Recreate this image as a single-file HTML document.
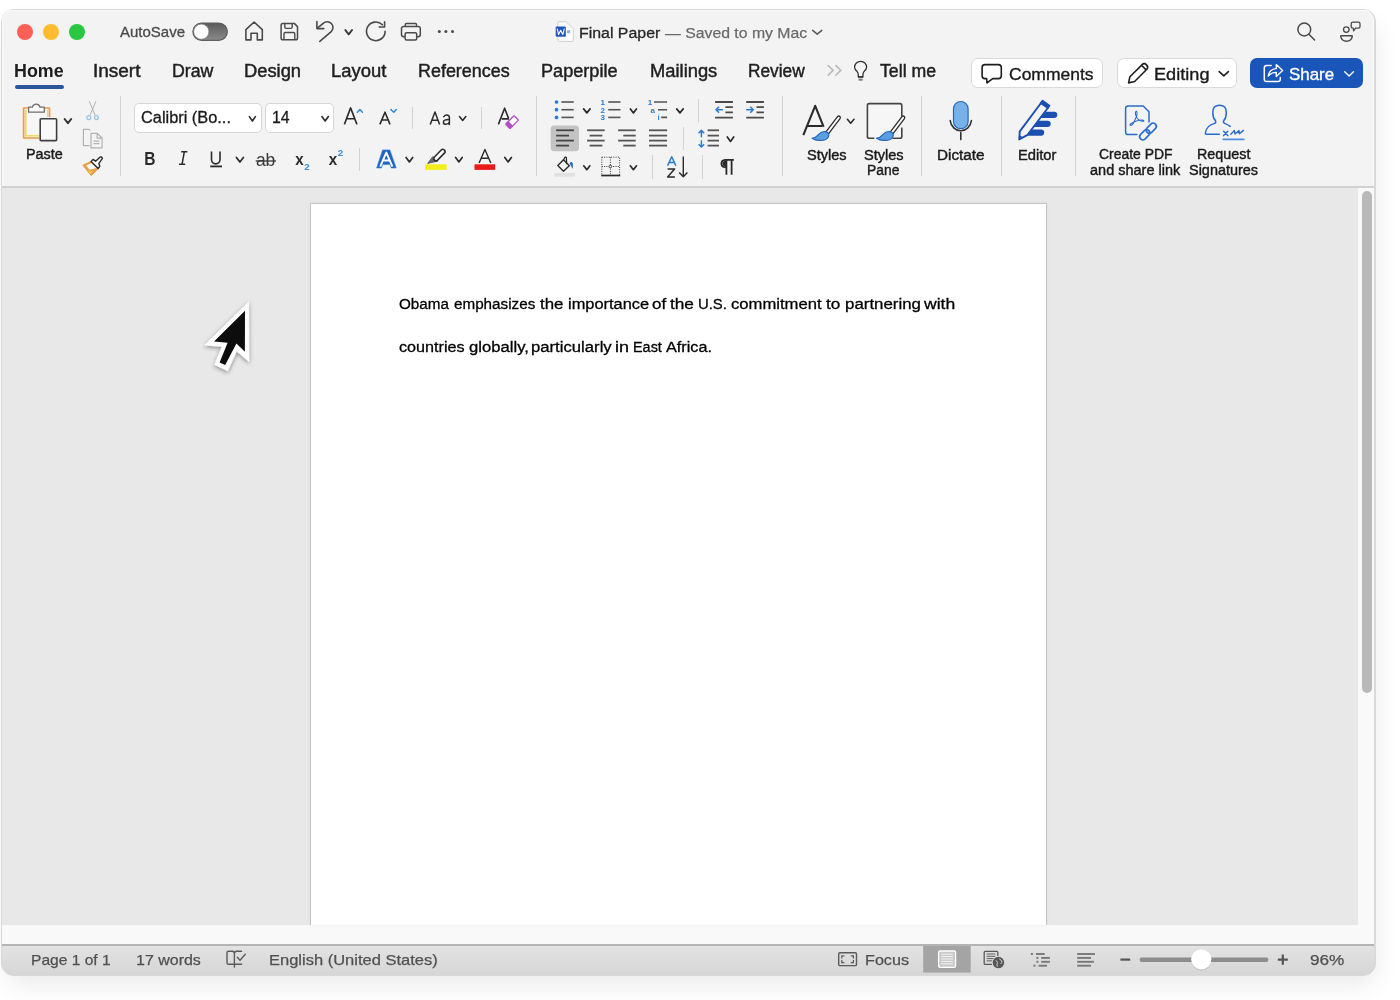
<!DOCTYPE html>
<html><head><meta charset="utf-8"><style>
html,body{margin:0;padding:0;width:1400px;height:1000px;overflow:hidden;background:#fff;font-family:"Liberation Sans", sans-serif}
.t{position:absolute;white-space:nowrap;transform-origin:0 0;font-family:"Liberation Sans", sans-serif}
#win{position:absolute;left:1px;top:8.5px;width:1374.5px;height:967.5px;border-radius:13px;background:#d9d9d9;box-shadow:3px 12px 26px -4px rgba(0,0,0,0.09)}
svg{overflow:visible}
</style></head><body>
<div id="root" style="position:absolute;left:0;top:0;width:1400px;height:1000px;will-change:transform">
<div id="win"></div>
<div style="position:absolute;left:2px;top:10px;width:1372px;height:176px;background:#f3f3f3;border-radius:11px 11px 0 0;box-shadow:inset 0 1px 0 #fafafa,inset 1px 0 0 #fafafa,inset -1px 0 0 #fafafa"></div>
<div style="position:absolute;left:2px;top:186px;width:1372px;height:2px;background:#d2d2d2"></div>
<div style="position:absolute;left:2px;top:188px;width:1356px;height:737px;background:#e8e8e8"></div>
<div style="position:absolute;left:1358px;top:188px;width:16px;height:737px;background:#f9f9f9"></div>
<div style="position:absolute;left:1362px;top:191px;width:10px;height:502px;background:#b9b9b9;border-radius:5px"></div>
<div style="position:absolute;left:2px;top:925px;width:1372px;height:19px;background:#f9f9f9"></div>
<div style="position:absolute;left:2px;top:944px;width:1372px;height:2px;background:#b4b4b4"></div>
<div style="position:absolute;left:2px;top:946px;width:1372px;height:29px;background:linear-gradient(#e2e2e2,#d6d6d6);border-radius:0 0 13px 13px"></div>
<div style="position:absolute;left:310px;top:203px;width:737px;height:722px;background:#fff;border:1px solid #c4c4c4;border-bottom:none;box-sizing:border-box;box-shadow:0 0 3px rgba(0,0,0,0.06)"></div>
<div style="position:absolute;left:17px;top:23.5px;width:16px;height:16px;background:#fe5f57;border-radius:50%"></div>
<div style="position:absolute;left:43px;top:23.5px;width:16px;height:16px;background:#febc2e;border-radius:50%"></div>
<div style="position:absolute;left:69px;top:23.5px;width:16px;height:16px;background:#28c840;border-radius:50%"></div>
<div class="t" style="left:120.00px;top:24.15px;font-size:15px;line-height:15px;color:#4a4a4a;transform:scaleX(0.9992);-webkit-text-stroke:0.3px #4a4a4a;">AutoSave</div>
<div class="t" style="left:579.03px;top:24.73px;font-size:15.5px;line-height:15.5px;color:#262626;transform:scaleX(1.0253);-webkit-text-stroke:0.3px #262626;">Final Paper</div>
<div class="t" style="left:665.00px;top:24.73px;font-size:15.5px;line-height:15.5px;color:#6a6a6a;transform:scaleX(1.0188);-webkit-text-stroke:0.25px #6a6a6a;">— Saved to my Mac</div>
<div class="t" style="left:14.24px;top:62.53px;font-size:17.5px;line-height:17.5px;color:#1d1d1d;font-weight:bold;transform:scaleX(1.0211);">Home</div>
<div class="t" style="left:92.99px;top:62.53px;font-size:17.5px;line-height:17.5px;color:#1f1f1f;transform:scaleX(1.0835);-webkit-text-stroke:0.45px #1f1f1f;">Insert</div>
<div class="t" style="left:171.58px;top:62.53px;font-size:17.5px;line-height:17.5px;color:#1f1f1f;transform:scaleX(1.0136);-webkit-text-stroke:0.45px #1f1f1f;">Draw</div>
<div class="t" style="left:244.23px;top:62.53px;font-size:17.5px;line-height:17.5px;color:#1f1f1f;transform:scaleX(1.0465);-webkit-text-stroke:0.45px #1f1f1f;">Design</div>
<div class="t" style="left:330.53px;top:62.53px;font-size:17.5px;line-height:17.5px;color:#1f1f1f;transform:scaleX(1.0527);-webkit-text-stroke:0.45px #1f1f1f;">Layout</div>
<div class="t" style="left:417.57px;top:62.53px;font-size:17.5px;line-height:17.5px;color:#1f1f1f;transform:scaleX(1.0240);-webkit-text-stroke:0.45px #1f1f1f;">References</div>
<div class="t" style="left:540.85px;top:62.53px;font-size:17.5px;line-height:17.5px;color:#1f1f1f;transform:scaleX(1.0355);-webkit-text-stroke:0.45px #1f1f1f;">Paperpile</div>
<div class="t" style="left:649.93px;top:62.53px;font-size:17.5px;line-height:17.5px;color:#1f1f1f;transform:scaleX(1.0480);-webkit-text-stroke:0.45px #1f1f1f;">Mailings</div>
<div class="t" style="left:748.32px;top:62.53px;font-size:17.5px;line-height:17.5px;color:#1f1f1f;transform:scaleX(0.9875);-webkit-text-stroke:0.45px #1f1f1f;">Review</div>
<div class="t" style="left:879.65px;top:62.53px;font-size:17.5px;line-height:17.5px;color:#1f1f1f;transform:scaleX(1.0120);-webkit-text-stroke:0.45px #1f1f1f;">Tell me</div>
<div style="position:absolute;left:15px;top:84.6px;width:49px;height:4px;background:#2b579a;border-radius:2px"></div>
<div style="position:absolute;left:970.5px;top:58.4px;width:132px;height:30px;background:#fff;border:1px solid #dadada;border-radius:7px;box-sizing:border-box"></div>
<div style="position:absolute;left:1116.6px;top:58.4px;width:120px;height:30px;background:#fff;border:1px solid #dadada;border-radius:7px;box-sizing:border-box"></div>
<div style="position:absolute;left:1250.4px;top:57.8px;width:113px;height:30.6px;background:#1a55b9;border-radius:7px"></div>
<div class="t" style="left:1008.63px;top:65.55px;font-size:17px;line-height:17px;color:#1a1a1a;transform:scaleX(1.0291);-webkit-text-stroke:0.35px #1a1a1a;">Comments</div>
<div class="t" style="left:1154.15px;top:65.55px;font-size:17px;line-height:17px;color:#1a1a1a;transform:scaleX(1.0673);-webkit-text-stroke:0.35px #1a1a1a;">Editing</div>
<div class="t" style="left:1289.24px;top:65.55px;font-size:17px;line-height:17px;color:#ffffff;transform:scaleX(0.9937);-webkit-text-stroke:0.35px #ffffff;">Share</div>
<div style="position:absolute;left:134.4px;top:102.7px;width:127.2px;height:30.3px;background:#fff;border:1px solid #d6d6d6;border-radius:5px;box-sizing:border-box"></div>
<div style="position:absolute;left:265.2px;top:102.7px;width:69.3px;height:30.3px;background:#fff;border:1px solid #d6d6d6;border-radius:5px;box-sizing:border-box"></div>
<div class="t" style="left:141.18px;top:109.70px;font-size:16px;line-height:16px;color:#1a1a1a;transform:scaleX(1.0215);-webkit-text-stroke:0.3px #1a1a1a;">Calibri (Bo...</div>
<div class="t" style="left:271.61px;top:109.70px;font-size:16px;line-height:16px;color:#1a1a1a;transform:scaleX(0.9888);-webkit-text-stroke:0.3px #1a1a1a;">14</div>
<div class="t" style="left:25.85px;top:147.10px;font-size:14px;line-height:14px;color:#1a1a1a;transform:scaleX(1.0288);-webkit-text-stroke:0.4px #1a1a1a;">Paste</div>
<div class="t" style="left:806.84px;top:147.60px;font-size:14px;line-height:14px;color:#1a1a1a;transform:scaleX(1.0397);-webkit-text-stroke:0.4px #1a1a1a;">Styles</div>
<div class="t" style="left:863.64px;top:147.60px;font-size:14px;line-height:14px;color:#1a1a1a;transform:scaleX(1.0397);-webkit-text-stroke:0.4px #1a1a1a;">Styles</div>
<div class="t" style="left:866.89px;top:163.20px;font-size:14px;line-height:14px;color:#1a1a1a;transform:scaleX(0.9890);-webkit-text-stroke:0.4px #1a1a1a;">Pane</div>
<div class="t" style="left:936.98px;top:147.60px;font-size:14px;line-height:14px;color:#1a1a1a;transform:scaleX(1.0912);-webkit-text-stroke:0.4px #1a1a1a;">Dictate</div>
<div class="t" style="left:1017.82px;top:147.60px;font-size:14px;line-height:14px;color:#1a1a1a;transform:scaleX(1.0508);-webkit-text-stroke:0.4px #1a1a1a;">Editor</div>
<div class="t" style="left:1099.00px;top:147.20px;font-size:14px;line-height:14px;color:#1a1a1a;transform:scaleX(0.9950);-webkit-text-stroke:0.4px #1a1a1a;">Create PDF</div>
<div class="t" style="left:1090.42px;top:163.00px;font-size:14px;line-height:14px;color:#1a1a1a;transform:scaleX(1.0359);-webkit-text-stroke:0.4px #1a1a1a;">and share link</div>
<div class="t" style="left:1196.75px;top:147.20px;font-size:14px;line-height:14px;color:#1a1a1a;transform:scaleX(1.0238);-webkit-text-stroke:0.4px #1a1a1a;">Request</div>
<div class="t" style="left:1189.35px;top:163.00px;font-size:14px;line-height:14px;color:#1a1a1a;transform:scaleX(1.0319);-webkit-text-stroke:0.4px #1a1a1a;">Signatures</div>
<div style="position:absolute;left:120px;top:96px;width:1px;height:80px;background:#d2d2d2"></div>
<div style="position:absolute;left:536px;top:96px;width:1px;height:80px;background:#d2d2d2"></div>
<div style="position:absolute;left:782px;top:96px;width:1px;height:80px;background:#d2d2d2"></div>
<div style="position:absolute;left:921px;top:96px;width:1px;height:80px;background:#d2d2d2"></div>
<div style="position:absolute;left:1001px;top:96px;width:1px;height:80px;background:#d2d2d2"></div>
<div style="position:absolute;left:1075px;top:96px;width:1px;height:80px;background:#d2d2d2"></div>
<div style="position:absolute;left:412px;top:107px;width:1px;height:22px;background:#d2d2d2"></div>
<div style="position:absolute;left:481px;top:107px;width:1px;height:22px;background:#d2d2d2"></div>
<div style="position:absolute;left:359px;top:148px;width:1px;height:23px;background:#d2d2d2"></div>
<div style="position:absolute;left:698px;top:99px;width:1px;height:22.5px;background:#d2d2d2"></div>
<div style="position:absolute;left:683px;top:127.4px;width:1px;height:22.599999999999994px;background:#d2d2d2"></div>
<div style="position:absolute;left:652px;top:155.4px;width:1px;height:23.19999999999999px;background:#d2d2d2"></div>
<div style="position:absolute;left:702px;top:155.4px;width:1px;height:23.19999999999999px;background:#d2d2d2"></div>
<div class="t" style="left:399.01px;top:296.02px;font-size:15.5px;line-height:15.5px;color:#000;transform:scaleX(0.9832);-webkit-text-stroke:0.3px #000;">Obama</div>
<div class="t" style="left:454.09px;top:296.02px;font-size:15.5px;line-height:15.5px;color:#000;transform:scaleX(0.9825);-webkit-text-stroke:0.3px #000;">emphasizes</div>
<div class="t" style="left:539.95px;top:296.02px;font-size:15.5px;line-height:15.5px;color:#000;transform:scaleX(1.0866);-webkit-text-stroke:0.3px #000;">the</div>
<div class="t" style="left:567.53px;top:296.02px;font-size:15.5px;line-height:15.5px;color:#000;transform:scaleX(1.0581);-webkit-text-stroke:0.3px #000;">importance</div>
<div class="t" style="left:652.22px;top:296.02px;font-size:15.5px;line-height:15.5px;color:#000;transform:scaleX(1.0956);-webkit-text-stroke:0.3px #000;">of</div>
<div class="t" style="left:670.44px;top:296.02px;font-size:15.5px;line-height:15.5px;color:#000;transform:scaleX(1.1108);-webkit-text-stroke:0.3px #000;">the</div>
<div class="t" style="left:698.18px;top:296.02px;font-size:15.5px;line-height:15.5px;color:#000;transform:scaleX(0.9596);-webkit-text-stroke:0.3px #000;">U.S.</div>
<div class="t" style="left:730.83px;top:296.02px;font-size:15.5px;line-height:15.5px;color:#000;transform:scaleX(1.0729);-webkit-text-stroke:0.3px #000;">commitment</div>
<div class="t" style="left:825.84px;top:296.02px;font-size:15.5px;line-height:15.5px;color:#000;transform:scaleX(1.1084);-webkit-text-stroke:0.3px #000;">to</div>
<div class="t" style="left:844.80px;top:296.02px;font-size:15.5px;line-height:15.5px;color:#000;transform:scaleX(1.0881);-webkit-text-stroke:0.3px #000;">partnering</div>
<div class="t" style="left:923.90px;top:296.02px;font-size:15.5px;line-height:15.5px;color:#000;transform:scaleX(1.1319);-webkit-text-stroke:0.3px #000;">with</div>
<div class="t" style="left:398.95px;top:338.72px;font-size:15.5px;line-height:15.5px;color:#000;transform:scaleX(1.0442);-webkit-text-stroke:0.3px #000;">countries</div>
<div class="t" style="left:468.63px;top:338.72px;font-size:15.5px;line-height:15.5px;color:#000;transform:scaleX(1.0743);-webkit-text-stroke:0.3px #000;">globally,</div>
<div class="t" style="left:530.52px;top:338.72px;font-size:15.5px;line-height:15.5px;color:#000;transform:scaleX(1.0766);-webkit-text-stroke:0.3px #000;">particularly</div>
<div class="t" style="left:615.13px;top:338.72px;font-size:15.5px;line-height:15.5px;color:#000;transform:scaleX(1.1603);-webkit-text-stroke:0.3px #000;">in</div>
<div class="t" style="left:632.55px;top:338.72px;font-size:15.5px;line-height:15.5px;color:#000;transform:scaleX(0.9298);-webkit-text-stroke:0.3px #000;">East</div>
<div class="t" style="left:665.80px;top:338.72px;font-size:15.5px;line-height:15.5px;color:#000;transform:scaleX(1.0454);-webkit-text-stroke:0.3px #000;">Africa.</div>
<div class="t" style="left:31.05px;top:952.45px;font-size:15px;line-height:15px;color:#505050;transform:scaleX(1.0381);-webkit-text-stroke:0.25px #505050;">Page 1 of 1</div>
<div class="t" style="left:135.70px;top:952.45px;font-size:15px;line-height:15px;color:#505050;transform:scaleX(1.0650);-webkit-text-stroke:0.25px #505050;">17 words</div>
<div class="t" style="left:269.38px;top:952.45px;font-size:15px;line-height:15px;color:#505050;transform:scaleX(1.1000);-webkit-text-stroke:0.25px #505050;">English (United States)</div>
<div class="t" style="left:865.41px;top:952.45px;font-size:15px;line-height:15px;color:#505050;transform:scaleX(1.0779);-webkit-text-stroke:0.25px #505050;">Focus</div>
<div class="t" style="left:1310.23px;top:952.45px;font-size:15px;line-height:15px;color:#505050;transform:scaleX(1.1458);-webkit-text-stroke:0.25px #505050;">96%</div>
<svg style="position:absolute;left:0;top:0;will-change:transform" width="1400" height="1000" viewBox="0 0 1400 1000"><defs><linearGradient id="tg" x1="0" y1="0" x2="0" y2="1"><stop offset="0" stop-color="#5c5c5c"/><stop offset="1" stop-color="#8a8a8a"/></linearGradient><linearGradient id="sb" x1="0" y1="0" x2="0" y2="1"><stop offset="0" stop-color="#e4e4e4"/><stop offset="1" stop-color="#d4d4d4"/></linearGradient><filter id="ks" x="-50%" y="-50%" width="200%" height="200%"><feDropShadow dx="0" dy="0.5" stdDeviation="0.6" flood-opacity="0.35"/></filter></defs><rect x="192.9" y="23.1" width="34.5" height="17.2" rx="8.6" fill="url(#tg)" stroke="#5e5e5e" stroke-width="1.2"/><circle cx="201.3" cy="31.7" r="7.6" fill="#fdfdfd" stroke="#7a7a7a" stroke-width="0.7"/><path d="M245.9,39.9 L245.9,29.6 L254.1,22 L262.3,29.6 L262.3,39.9 L257.3,39.9 L257.3,33.3 L251,33.3 L251,39.9 Z" fill="none" stroke="#4a4a4a" stroke-width="1.6" stroke-linejoin="round"/><path d="M282.8,23.4 L294.3,23.4 L297.5,26.6 L297.5,37.9 Q297.5,39.8 295.6,39.8 L283,39.8 Q281.1,39.8 281.1,37.9 L281.1,25.2 Q281.1,23.4 282.8,23.4 Z" fill="none" stroke="#4a4a4a" stroke-width="1.5" stroke-linejoin="round"/><path d="M284.8,23.6 L284.8,27 Q284.8,28.4 286.2,28.4 L290.8,28.4 Q292.2,28.4 292.2,27 L292.2,23.6" fill="none" stroke="#4a4a4a" stroke-width="1.4"/><path d="M284,39.6 L284,34 Q284,32.5 285.5,32.5 L293.3,32.5 Q294.8,32.5 294.8,34 L294.8,39.6" fill="none" stroke="#4a4a4a" stroke-width="1.4"/><path d="M316.9,21.6 L316.9,28.6 L323.8,28.6" fill="none" stroke="#4a4a4a" stroke-width="1.6" stroke-linecap="round" stroke-linejoin="round"/><path d="M317.4,28.1 L323.2,23.3 A5.7,5.7 0 0 1 331.2,31.6 L319.8,41.4" fill="none" stroke="#4a4a4a" stroke-width="1.6" stroke-linecap="round"/><path d="M345.40000000000003,30.1 L348.70000000000005,34.3 L352.0,30.1" fill="none" stroke="#3a3a3a" stroke-width="1.9" stroke-linecap="round" stroke-linejoin="round"/><path d="M385.1,31.4 A9.3,9.3 0 1 1 382.4,24.8" fill="none" stroke="#4a4a4a" stroke-width="1.6" stroke-linecap="round"/><path d="M384.6,21.8 L384.6,27 L379.2,27" fill="none" stroke="#4a4a4a" stroke-width="1.6" stroke-linecap="round" stroke-linejoin="round"/><rect x="401.5" y="26.4" width="18.8" height="10.4" rx="2.2" fill="none" stroke="#4a4a4a" stroke-width="1.5"/><path d="M405.3,26.2 L405.3,24.5 Q405.3,23.5 406.3,23.5 L415.5,23.5 Q416.5,23.5 416.5,24.5 L416.5,26.2" fill="none" stroke="#4a4a4a" stroke-width="1.4"/><rect x="405.1" y="32.7" width="11.6" height="7.3" rx="1.5" fill="#f3f3f3" stroke="#4a4a4a" stroke-width="1.5"/><circle cx="439.3" cy="31.6" r="1.5" fill="#4a4a4a"/><circle cx="445.9" cy="31.6" r="1.5" fill="#4a4a4a"/><circle cx="452.5" cy="31.6" r="1.5" fill="#4a4a4a"/><path d="M558,21.8 L566.2,21.8 L573.3,28.6 L573.3,40.2 Q573.3,41.4 572.1,41.4 L559.2,41.4 Q558,41.4 558,40.2 Z" fill="#fff" stroke="#c8c8c8" stroke-width="0.9"/><rect x="555.7" y="26.4" width="10.1" height="10.3" rx="1.2" fill="#1f55b5"/><path d="M557.2,28.6 L558.6,34.6 L560.7,30.2 L562.8,34.6 L564.3,28.6" fill="none" stroke="#fff" stroke-width="1.1" stroke-linejoin="round"/><rect x="567" y="30.2" width="3.2" height="3" fill="#8fb3e3"/><path d="M812.6,30.400000000000002 L817.2,34.199999999999996 L821.8,30.400000000000002" fill="none" stroke="#5a5a5a" stroke-width="1.5" stroke-linecap="round" stroke-linejoin="round"/><circle cx="1304.3" cy="29.5" r="6.4" fill="none" stroke="#4a4a4a" stroke-width="1.5"/><path d="M1309.2,34.4 L1314.6,40" stroke="#4a4a4a" stroke-width="1.5" stroke-linecap="round"/><circle cx="1346.3" cy="29.6" r="2.8" fill="none" stroke="#4a4a4a" stroke-width="1.3"/><path d="M1341,35.8 L1352,35.8 Q1352.4,35.8 1352.3,36.4 Q1351.4,41.2 1346.5,41.2 Q1341.6,41.2 1340.7,36.4 Q1340.6,35.8 1341,35.8 Z" fill="none" stroke="#4a4a4a" stroke-width="1.4" stroke-linejoin="round"/><path d="M1353,22.2 L1358.4,22.2 Q1360,22.2 1360,23.8 L1360,26.6 Q1360,28.2 1358.4,28.2 L1355.6,28.2 L1353.6,30.8 L1353.2,28.2 Q1351.2,28.2 1351.2,26.6 L1351.2,23.8 Q1351.2,22.2 1353,22.2 Z" fill="none" stroke="#4a4a4a" stroke-width="1.3" stroke-linejoin="round"/><path d="M828.2,65.6 L833.1,70.3 L828.2,75.1 M835.9,65.6 L840.8,70.3 L835.9,75.1" fill="none" stroke="#bcbcbc" stroke-width="1.7" stroke-linecap="round" stroke-linejoin="round"/><path d="M858.2,76.6 L858.2,74.2 Q858.2,72.8 857.2,71.6 Q854.6,69.2 854.6,67.3 A6,6 0 0 1 866.6,67.3 Q866.6,69.2 864,71.6 Q863,72.8 863,74.2 L863,76.6 Z" fill="#f7f7f7" stroke="#333" stroke-width="1.3" stroke-linejoin="round"/><path d="M858.4,77.6 L862.8,77.6 M859,79.8 L862.2,79.8" stroke="#555" stroke-width="1.2" stroke-linecap="round"/><path d="M985,64.6 L998.4,64.6 Q1001.3,64.6 1001.3,67.5 L1001.3,75.7 Q1001.3,78.6 998.4,78.6 L992.7,78.6 L987,82.8 L986.6,78.6 L985,78.6 Q982.1,78.6 982.1,75.7 L982.1,67.5 Q982.1,64.6 985,64.6 Z" fill="none" stroke="#1d1d1d" stroke-width="1.6" stroke-linejoin="round"/><path d="M1128.6,82.9 L1129.9,76.7 L1141.9,64.9 A2.9,2.9 0 0 1 1146.6,69.5 L1134.6,81.5 Z M1141.5,65.3 L1146.1,69.9" fill="none" stroke="#1d1d1d" stroke-width="1.6" stroke-linejoin="round"/><path d="M1219.1999999999998,71.6 L1223.8,75.80000000000001 L1228.4,71.6" fill="none" stroke="#1d1d1d" stroke-width="1.6" stroke-linecap="round" stroke-linejoin="round"/><path d="M1271.2,65.4 L1266.6,65.4 Q1264.3,65.4 1264.3,67.7 L1264.3,79.2 Q1264.3,81.5 1266.6,81.5 L1278,81.5 Q1280.3,81.5 1280.3,79.2 L1280.3,77.4" fill="none" stroke="#fff" stroke-width="1.5" stroke-linecap="round"/><path d="M1268.2,76.1 Q1269.5,68.8 1276.3,68.6 L1276.3,64.6 L1282.6,70.4 L1276.3,76.4 L1276.3,72.4 Q1271.8,72.1 1268.2,76.1 Z" fill="none" stroke="#fff" stroke-width="1.4" stroke-linejoin="round"/><path d="M1344.6999999999998,71.8 L1349.1,76.0 L1353.5,71.8" fill="none" stroke="#fff" stroke-width="1.4" stroke-linecap="round" stroke-linejoin="round"/><path d="M28.5,108 L24,108 Q23.6,108 23.6,108.4 L23.6,137.6 Q23.6,138 24,138 L39.4,138" fill="none" stroke="#e59f45" stroke-width="1.7"/><path d="M44.4,108 L49,108 Q49.5,108 49.5,108.4 L49.5,117" fill="none" stroke="#e59f45" stroke-width="1.7"/><path d="M25.8,110 L25.8,135.8 L39.4,135.8" fill="none" stroke="#f4d763" stroke-width="1.6"/><path d="M47.5,110 L47.5,117" fill="none" stroke="#f4d763" stroke-width="1.2"/><rect x="27" y="110.8" width="19.5" height="24" fill="#f6f6f6"/><path d="M28.6,107.2 L32.4,107.2 A3.9,3.9 0 0 1 40,107.2 L44.3,107.2 L44.3,112.2 L28.6,112.2 Z" fill="#fbfbfb" stroke="#6e6e6e" stroke-width="1.3" stroke-linejoin="round"/><rect x="40.2" y="118.8" width="16.4" height="21.8" rx="0.8" fill="#f8f8f8" stroke="#3f3f3f" stroke-width="1.6"/><path d="M64.6,119.0 L67.9,123.2 L71.2,119.0" fill="none" stroke="#333" stroke-width="2" stroke-linecap="round" stroke-linejoin="round"/><path d="M89.3,101.3 L95.3,115.5 M95.9,101.3 L89.9,115.5" stroke="#a9a9a9" stroke-width="0.9"/><circle cx="88.8" cy="117.6" r="2" fill="none" stroke="#8ec3ec" stroke-width="1.1"/><circle cx="96.4" cy="117.6" r="2" fill="none" stroke="#8ec3ec" stroke-width="1.1"/><path d="M89.6,145.6 L83.4,145.6 L83.4,129.3 L88.8,129.3 L90.2,130.6" fill="none" stroke="#b2b2b2" stroke-width="1.2" stroke-linejoin="round"/><path d="M91,133.3 L97.4,133.3 L102.1,138 L102.1,147.9 L91,147.9 Z M97.2,133.5 L97.2,138.2 L101.9,138.2 M93.5,141.2 L99.5,141.2 M93.5,143.6 L99.5,143.6" fill="none" stroke="#b2b2b2" stroke-width="1.2" stroke-linejoin="round"/><path d="M91.2,161.4 L82.9,165.2 L91.2,175.6 L98.4,168.4 Z" fill="#eba24a" stroke="#e3973a" stroke-width="1" stroke-linejoin="round"/><path d="M91.6,163 L86.2,165.6 L89.6,169.8 L96.4,168 Z" fill="#fbfbfb"/><path d="M88.6,171.2 L90.4,173 L92.2,171.2" fill="none" stroke="#f5d34a" stroke-width="1.2"/><path d="M91,161.6 L93,159.4 L95.6,161.2 L99.9,157.2 Q101.4,156.2 102.4,158.4 L98.8,163.6 L99.8,166.2 L98.2,168.6 Z" fill="#fafafa" stroke="#2b2b2b" stroke-width="1.4" stroke-linejoin="round"/><path d="M249.4,116.6 L252.4,121.0 L255.4,116.6" fill="none" stroke="#2b2b2b" stroke-width="1.6" stroke-linecap="round" stroke-linejoin="round"/><path d="M321.90000000000003,116.6 L325.15,121.0 L328.4,116.6" fill="none" stroke="#2b2b2b" stroke-width="1.6" stroke-linecap="round" stroke-linejoin="round"/><path d="M344.4,124.4 L350.6,107.9 L356.9,124.4 M346.8,118.8 L354.4,118.8" fill="none" stroke="#2b2b2b" stroke-width="1.6" stroke-linejoin="round"/><path d="M357.4,112.2 L359.9,109.6 L362.4,112.2" fill="none" stroke="#2f8ad0" stroke-width="1.5" stroke-linecap="round" stroke-linejoin="round"/><path d="M379.9,124.4 L385,112.2 L390,124.4 M381.7,120 L388.3,120" fill="none" stroke="#2b2b2b" stroke-width="1.6" stroke-linejoin="round"/><path d="M391,109.6 L393.8,112.2 L396.3,109.6" fill="none" stroke="#2f8ad0" stroke-width="1.5" stroke-linecap="round" stroke-linejoin="round"/><path d="M430.2,124.4 L435,112 L439.6,124.4 M432,120.2 L437.9,120.2" fill="none" stroke="#2b2b2b" stroke-width="1.5" stroke-linejoin="round"/><path d="M443.8,116.6 Q445,115 446.8,115 Q449.4,115 449.4,117.8 L449.4,124.4 M449.4,119.6 Q443.4,119.4 443.4,122.2 Q443.4,124.3 445.8,124.3 Q448.4,124.3 449.4,122" fill="none" stroke="#2b2b2b" stroke-width="1.5" stroke-linecap="round"/><path d="M459.5,116.6 L462.65,120.4 L465.79999999999995,116.6" fill="none" stroke="#2b2b2b" stroke-width="1.6" stroke-linecap="round" stroke-linejoin="round"/><path d="M498.4,124.4 L504.6,108.2 L508.6,118.4 M501.8,118.9 L509,118.9" fill="none" stroke="#2b2b2b" stroke-width="1.6" stroke-linejoin="round"/><g transform="rotate(-45 512 122)"><rect x="506" y="119" width="12" height="6.2" rx="0.8" fill="#fff" stroke="#b24cc3" stroke-width="1.3"/><rect x="506" y="119" width="4" height="6.2" fill="#b24cc3"/></g><text transform="translate(144.19 164.50) scale(0.8203 1)" font-family="Liberation Sans" font-size="18.99" font-weight="bold" fill="#2b2b2b" >B</text><path d="M181.2,151.8 L187.4,151.8 M179,164.2 L185.2,164.2 M184.3,151.8 L182.1,164.2" fill="none" stroke="#2b2b2b" stroke-width="1.5"/><path d="M211.5,151.6 L211.5,159.6 A4.25,4.25 0 0 0 220,159.6 L220,151.6" fill="none" stroke="#2b2b2b" stroke-width="1.6"/><path d="M210.2,166.4 L222,166.4" stroke="#2b2b2b" stroke-width="1.8"/><path d="M236.4,157.4 L239.9,162.1 L243.4,157.4" fill="none" stroke="#2b2b2b" stroke-width="1.7" stroke-linecap="round" stroke-linejoin="round"/><text transform="translate(255.90 165.70) scale(0.9898 1)" font-family="Liberation Sans" font-size="17.66" fill="#3a3a3a" >ab</text><path d="M255.7,161 L276,161" stroke="#3a3a3a" stroke-width="1.3"/><text transform="translate(295.25 164.60) scale(0.8748 1)" font-family="Liberation Sans" font-size="17.36" font-weight="bold" fill="#2b2b2b" >x</text><text transform="translate(304.26 170.00) scale(1.0080 1)" font-family="Liberation Sans" font-size="9.71" font-weight="bold" fill="#3a8ed6" >2</text><text transform="translate(328.75 164.60) scale(0.8748 1)" font-family="Liberation Sans" font-size="17.36" font-weight="bold" fill="#2b2b2b" >x</text><text transform="translate(337.86 155.70) scale(1.0710 1)" font-family="Liberation Sans" font-size="9.14" font-weight="bold" fill="#3a8ed6" >2</text><path d="M376.6,168 L382.6,149.9 L389.9,149.9 L396.2,168 L391.2,168 L390,164.4 L382.6,164.4 L381.4,168 Z" fill="#1d63c6" stroke="#3b82d8" stroke-width="0.6" stroke-linejoin="round"/><path d="M380.2,166.6 L386.3,152.6 L392.4,166.6 M383.2,160.6 L389.4,160.6" fill="none" stroke="#fff" stroke-width="2" stroke-linejoin="round"/><path d="M406.1,157.4 L409.4,161.9 L412.7,157.4" fill="none" stroke="#2b2b2b" stroke-width="1.7" stroke-linecap="round" stroke-linejoin="round"/><path d="M432.8,156.6 L437.6,161.2 L427.6,163.4 Z" fill="#6a6a6a" stroke="#555" stroke-width="0.8" stroke-linejoin="round"/><path d="M436,158.6 L442.8,151.6" stroke="#2e2e2e" stroke-width="6" stroke-linecap="round"/><path d="M436,158.6 L442.8,151.6" stroke="#fafafa" stroke-width="2.8" stroke-linecap="round"/><rect x="425.2" y="164.3" width="21.4" height="5.6" fill="#f3ee19"/><path d="M455.6,157.4 L458.9,161.9 L462.2,157.4" fill="none" stroke="#2b2b2b" stroke-width="1.7" stroke-linecap="round" stroke-linejoin="round"/><path d="M479.1,163 L484.9,149.5 L490.8,163 M481.2,158.3 L488.7,158.3" fill="none" stroke="#2b2b2b" stroke-width="1.4" stroke-linejoin="round"/><rect x="474.5" y="164.3" width="20.7" height="5.6" fill="#ea1b1b"/><path d="M504.8,157.4 L508.1,161.9 L511.4,157.4" fill="none" stroke="#2b2b2b" stroke-width="1.7" stroke-linecap="round" stroke-linejoin="round"/><circle cx="556.5" cy="102" r="1.85" fill="#2b7cd3"/><path d="M561.4,102 L573.7,102" stroke="#555" stroke-width="1.6"/><circle cx="556.5" cy="109.7" r="1.85" fill="#2b7cd3"/><path d="M561.4,109.7 L573.7,109.7" stroke="#555" stroke-width="1.6"/><circle cx="556.5" cy="117.4" r="1.85" fill="#2b7cd3"/><path d="M561.4,117.4 L573.7,117.4" stroke="#555" stroke-width="1.6"/><path d="M583.6,108.89999999999999 L586.85,112.9 L590.1,108.89999999999999" fill="none" stroke="#2b2b2b" stroke-width="1.7" stroke-linecap="round" stroke-linejoin="round"/><text x="600.6" y="105" font-family="Liberation Sans" font-weight="bold" font-size="8" fill="#2b7cd3">1</text><path d="M608.2,102 L620.5,102" stroke="#555" stroke-width="1.6"/><text x="600.6" y="112.7" font-family="Liberation Sans" font-weight="bold" font-size="8" fill="#2b7cd3">2</text><path d="M608.2,109.7 L620.5,109.7" stroke="#555" stroke-width="1.6"/><text x="600.6" y="120.4" font-family="Liberation Sans" font-weight="bold" font-size="8" fill="#2b7cd3">3</text><path d="M608.2,117.4 L620.5,117.4" stroke="#555" stroke-width="1.6"/><path d="M630.4,108.89999999999999 L633.4,112.9 L636.4,108.89999999999999" fill="none" stroke="#2b2b2b" stroke-width="1.7" stroke-linecap="round" stroke-linejoin="round"/><text x="647.8" y="105" font-family="Liberation Sans" font-weight="bold" font-size="8" fill="#2b7cd3">1</text><text x="650.6" y="112.7" font-family="Liberation Sans" font-weight="bold" font-size="8" fill="#2b7cd3">a</text><path d="M658.6,115.6 L658.6,120 M658.6,113.9 L658.6,114.4" stroke="#2b7cd3" stroke-width="1"/><path d="M654,102 L667.1,102 M658,109.7 L667.1,109.7 M661.2,117.4 L667.1,117.4" stroke="#555" stroke-width="1.6"/><path d="M676.7,108.89999999999999 L679.95,112.9 L683.1999999999999,108.89999999999999" fill="none" stroke="#2b2b2b" stroke-width="1.7" stroke-linecap="round" stroke-linejoin="round"/><path d="M715.1,102 L732.9,102 M725.4,107.1 L732.9,107.1 M725.4,112.3 L732.9,112.3 M715.1,117.6 L732.9,117.6" stroke="#4a4a4a" stroke-width="1.8"/><path d="M722.9,109.7 L716,109.7 M719,106.7 L716,109.7 L719,112.7" fill="none" stroke="#2b7cd3" stroke-width="1.6" stroke-linejoin="round"/><path d="M746.2,102 L763.9,102 M756.5,107.1 L763.9,107.1 M756.5,112.3 L763.9,112.3 M746.2,117.6 L763.9,117.6" stroke="#4a4a4a" stroke-width="1.8"/><path d="M746.2,109.7 L753.2,109.7 M750.2,106.7 L753.2,109.7 L750.2,112.7" fill="none" stroke="#2b7cd3" stroke-width="1.6" stroke-linejoin="round"/><rect x="550.7" y="125.6" width="28.3" height="25.7" rx="3.5" fill="#c3c3c3"/><path d="M556.1,130.3 L573.9,130.3" stroke="#444" stroke-width="1.8"/><path d="M556.1,135.6 L569,135.6" stroke="#444" stroke-width="1.8"/><path d="M556.1,140.6 L573.9,140.6" stroke="#444" stroke-width="1.8"/><path d="M556.1,145.6 L569,145.6" stroke="#444" stroke-width="1.8"/><path d="M587.1,130.3 L604.7,130.3" stroke="#555" stroke-width="1.8"/><path d="M589.6,135.6 L602.4,135.6" stroke="#555" stroke-width="1.8"/><path d="M587.1,140.6 L604.7,140.6" stroke="#555" stroke-width="1.8"/><path d="M589.6,145.6 L602.4,145.6" stroke="#555" stroke-width="1.8"/><path d="M618.1,130.3 L635.7,130.3" stroke="#555" stroke-width="1.8"/><path d="M623.3,135.6 L635.7,135.6" stroke="#555" stroke-width="1.8"/><path d="M618.1,140.6 L635.7,140.6" stroke="#555" stroke-width="1.8"/><path d="M623.3,145.6 L635.7,145.6" stroke="#555" stroke-width="1.8"/><path d="M649,130.3 L667.1,130.3" stroke="#555" stroke-width="1.8"/><path d="M649,135.6 L667.1,135.6" stroke="#555" stroke-width="1.8"/><path d="M649,140.6 L667.1,140.6" stroke="#555" stroke-width="1.8"/><path d="M649,145.6 L667.1,145.6" stroke="#555" stroke-width="1.8"/><path d="M707.6,130.3 L719,130.3" stroke="#555" stroke-width="1.8"/><path d="M707.6,135.6 L719,135.6" stroke="#555" stroke-width="1.8"/><path d="M707.6,140.6 L719,140.6" stroke="#555" stroke-width="1.8"/><path d="M707.6,145.6 L719,145.6" stroke="#555" stroke-width="1.8"/><path d="M701.4,130.6 L701.4,137.2 M698.6,133.2 L701.4,130.4 L704.2,133.2 M701.4,140.2 L701.4,146.8 M698.6,144.2 L701.4,147 L704.2,144.2" fill="none" stroke="#2b7cd3" stroke-width="1.5" stroke-linejoin="round"/><path d="M727.3000000000001,136.9 L730.5,141.4 L733.6999999999999,136.9" fill="none" stroke="#2b2b2b" stroke-width="1.7" stroke-linecap="round" stroke-linejoin="round"/><rect x="554.5" y="172.9" width="20.2" height="3.8" fill="#e1e1e1"/><path d="M557.8,165.5 L563.5,159.8 L569.3,165.7 L563.5,171.3 Z" fill="none" stroke="#2b2b2b" stroke-width="1.4" stroke-linejoin="round"/><path d="M563.6,159.8 L564.8,157.5 Q565.6,156.5 566.4,157.6 L566.6,163.6" fill="none" stroke="#2b2b2b" stroke-width="1.3" stroke-linecap="round"/><path d="M569.6,163.4 Q571.3,160.8 572.8,163.4 L572.8,169 Q571,166 569.6,163.4 Z" fill="#1f6cc5"/><path d="M583.7,165.79999999999998 L586.8,169.70000000000002 L589.9,165.79999999999998" fill="none" stroke="#2b2b2b" stroke-width="1.7" stroke-linecap="round" stroke-linejoin="round"/><path d="M601.8,157.2 L619.6,157.2 L619.6,175.2 M601.8,157.2 L601.8,175.2 M610.4,157.2 L610.4,175.2 M601.8,166.5 L619.6,166.5" fill="none" stroke="#3a3a3a" stroke-width="1" stroke-dasharray="1 1.3"/><path d="M601.2,175.5 L620.2,175.5" stroke="#2b2b2b" stroke-width="1.7"/><circle cx="610.4" cy="166.5" r="1.3" fill="#f3f3f3" stroke="#3a3a3a" stroke-width="0.9"/><path d="M630.3000000000001,165.79999999999998 L633.4000000000001,169.70000000000002 L636.5,165.79999999999998" fill="none" stroke="#2b2b2b" stroke-width="1.7" stroke-linecap="round" stroke-linejoin="round"/><path d="M667.6,165.6 L671.7,156.8 L675.8,165.6 M669.1,162.6 L674.3,162.6" fill="none" stroke="#2b7cd3" stroke-width="1.5" stroke-linejoin="round"/><path d="M667.6,168.9 L674.6,168.9 L667.6,177 L674.9,177" fill="none" stroke="#2b2b2b" stroke-width="1.5" stroke-linejoin="round"/><path d="M683.3,156.6 L683.3,177 M679.2,172.4 L683.3,176.8 L687.4,172.4" fill="none" stroke="#2b2b2b" stroke-width="1.4" stroke-linejoin="round"/><path d="M726.4,174.8 L726.4,159.8 M731.6,174.8 L731.6,159.8 M733.8,159.9 L725.3,159.9 Q721.4,160.2 721.4,163.6 Q721.4,167.2 725.6,167.4 L726.4,167.4" fill="none" stroke="#2b2b2b" stroke-width="1.8"/><path d="M726.4,160.5 Q722.4,160.8 722.4,163.6 Q722.4,166.6 726.4,166.8 Z" fill="#2b2b2b"/><path d="M803.3,135.2 L815.2,105.8 L823.6,126.8 M807.4,126 L822,126" fill="none" stroke="#2b2b2b" stroke-width="2.1" stroke-linejoin="round"/><g transform="translate(0 0)"><path d="M827.4,132.6 L838.8,117.6" stroke="#2b2b2b" stroke-width="4.4" stroke-linecap="round"/><path d="M827.4,132.6 L838.8,117.6" stroke="#fff" stroke-width="1.8" stroke-linecap="round"/><path d="M812,138.2 Q816.2,137.6 818.4,134.6 Q821.6,131 825.6,131.6 Q829.2,132.6 828.8,135.8 Q827.6,140.6 819.6,140.4 Q815,140.4 812,138.2 Z" fill="#5c9fe0" stroke="#2165bd" stroke-width="1.1" stroke-linejoin="round"/></g><path d="M847.4,119.3 L850.7,123.2 L854.0,119.3" fill="none" stroke="#2b2b2b" stroke-width="1.6" stroke-linecap="round" stroke-linejoin="round"/><path d="M874.4,138.2 L869.2,138.2 Q867.4,138.2 867.4,136.4 L867.4,105.4 Q867.4,103.6 869.2,103.6 L900,103.6 Q901.8,103.6 901.8,105.4 L901.8,116.4 M901.8,127.6 L901.8,136.4 Q901.8,138.2 900,138.2 L892.4,138.2" fill="#f6f6f6" stroke="#444" stroke-width="1.6"/><g transform="translate(64.4 0)"><path d="M827.4,132.6 L838.8,117.6" stroke="#2b2b2b" stroke-width="4.4" stroke-linecap="round"/><path d="M827.4,132.6 L838.8,117.6" stroke="#fff" stroke-width="1.8" stroke-linecap="round"/><path d="M812,138.2 Q816.2,137.6 818.4,134.6 Q821.6,131 825.6,131.6 Q829.2,132.6 828.8,135.8 Q827.6,140.6 819.6,140.4 Q815,140.4 812,138.2 Z" fill="#5c9fe0" stroke="#2165bd" stroke-width="1.1" stroke-linejoin="round"/></g><rect x="953.5" y="101.5" width="14.6" height="27.2" rx="7.3" fill="#78b1e7" stroke="#2567bb" stroke-width="1.2"/><path d="M950.2,120.6 A10.7,11.8 0 0 0 971.4,120.6 M960.8,132.6 L960.8,139.6" fill="none" stroke="#333" stroke-width="1.6" stroke-linecap="round"/><path d="M1040.8,114.8 L1054.2,114.8 M1035.3,123.8 L1047.6,123.8 M1028.8,132.6 L1041.1,132.6" stroke="#1b4fb0" stroke-width="6.2" stroke-linecap="round"/><path d="M1019.2,139.4 L1019.8,131.4 L1041.2,102.8 L1048,107.8 L1027.2,135.2 Z" fill="#f3f3f3" stroke="#1b4fb0" stroke-width="1.9" stroke-linejoin="round"/><path d="M1040.6,103 L1042.6,100.6 L1049.6,105.6 L1048,108 Z" fill="#1b4fb0" stroke="#1b4fb0" stroke-width="1.6" stroke-linejoin="round"/><path d="M1019.4,139.3 L1019.8,135.2 L1023,137.6 Z" fill="#1b4fb0"/><path d="M1136.9,134.6 L1128.2,134.6 Q1125.6,134.6 1125.6,132 L1125.6,108.6 Q1125.6,106 1128.2,106 L1143.2,106 L1149,111.8 L1149,122" fill="none" stroke="#2a6bd0" stroke-width="1.5" stroke-linecap="round" stroke-linejoin="round"/><path d="M1130,124.8 Q1131.2,126.4 1133.4,123.2 L1136.6,116.2 Q1137.6,112 1136.4,111.2 Q1135,111.4 1135.6,114.6 Q1136.6,118.4 1139,120 Q1141.6,121.6 1143.6,121.2 Q1144.4,120.4 1142,120 Q1137.2,119.8 1133,122.6 Q1129.6,124.4 1130,124.8 Z" fill="none" stroke="#2a6bd0" stroke-width="1.1" stroke-linejoin="round"/><g transform="rotate(-45 1148 131.5)" fill="none" stroke="#2a6bd0" stroke-width="1.6"><rect x="1137.6" y="128.3" width="11.6" height="6.4" rx="3.2"/><rect x="1146.8" y="128.3" width="11.6" height="6.4" rx="3.2"/></g><path d="M1219.3,134.3 L1206.6,134.3 Q1205.2,134.3 1205.4,132.8 Q1206.4,125.6 1214.6,123.4 Q1216.4,122.4 1215.4,120.6 Q1212.8,117.8 1212.8,112.4 Q1212.8,105.3 1219.6,105.3 Q1226.3,105.3 1226.3,112.4 Q1226.3,117.8 1223.8,120.6 Q1222.8,122.4 1224.6,123.4 Q1228,124.6 1230.2,126.4" fill="none" stroke="#2a6bd0" stroke-width="1.5" stroke-linecap="round" stroke-linejoin="round"/><path d="M1223.6,131.2 L1227.8,135.6 M1227.8,131.2 L1223.6,135.6" stroke="#2a6bd0" stroke-width="1.5" stroke-linecap="round"/><path d="M1230.8,134.2 L1234.4,130.6 L1235,134 L1239,130.6 L1239.4,133.8 L1243.4,130.4" fill="none" stroke="#2a6bd0" stroke-width="1.4" stroke-linecap="round" stroke-linejoin="round"/><path d="M1223.4,139.4 L1243.8,139.4" stroke="#4a8ee0" stroke-width="1.9" stroke-linecap="round"/><path d="M234.4,964.3 L228.6,964.3 Q227,964.3 227,962.7 L227,952.8 Q227,951.3 228.6,951.3 L232.4,951.3 Q234.4,951.3 234.4,953.6 L234.4,967 M234.4,953.6 Q234.4,951.3 236.6,951.3 L241.6,951.3 M234.6,964.3 L241.6,964.3" fill="none" stroke="#5a5a5a" stroke-width="1.4" stroke-linecap="round"/><path d="M237.4,957.3 L240,960.2 L245.3,954.3" fill="none" stroke="#5a5a5a" stroke-width="1.4" stroke-linecap="round" stroke-linejoin="round"/><rect x="838.7" y="952.8" width="17.8" height="12.8" rx="1.2" fill="none" stroke="#5a5a5a" stroke-width="1.4"/><path d="M841.8,958.4 L841.8,955.8 L844.4,955.8 M850.8,955.8 L853.4,955.8 L853.4,958.4 M853.4,960 L853.4,962.6 L850.8,962.6 M844.4,962.6 L841.8,962.6 L841.8,960" fill="none" stroke="#5a5a5a" stroke-width="1.2"/><rect x="923.2" y="946" width="47.5" height="26.6" fill="#a4a4a4"/><rect x="938.6" y="951" width="17" height="16.3" rx="1.6" fill="#c9c9c9" stroke="#fff" stroke-width="1.3"/><path d="M941.2,954.2 L953,954.2" stroke="#f2f2f2" stroke-width="1"/><path d="M941.2,956.6 L953,956.6" stroke="#f2f2f2" stroke-width="1"/><path d="M941.2,959 L953,959" stroke="#f2f2f2" stroke-width="1"/><path d="M941.2,961.4 L953,961.4" stroke="#f2f2f2" stroke-width="1"/><path d="M941.2,963.8 L953,963.8" stroke="#f2f2f2" stroke-width="1"/><rect x="984.2" y="951.4" width="13.6" height="13" rx="1" fill="none" stroke="#5a5a5a" stroke-width="1.3"/><path d="M986.6,954 L995.4,954" stroke="#5a5a5a" stroke-width="1"/><path d="M986.6,956.3 L995.4,956.3" stroke="#5a5a5a" stroke-width="1"/><path d="M986.6,958.6 L995.4,958.6" stroke="#5a5a5a" stroke-width="1"/><path d="M986.6,960.9 L995.4,960.9" stroke="#5a5a5a" stroke-width="1"/><circle cx="998.4" cy="962.6" r="6.2" fill="#555" stroke="#dcdcdc" stroke-width="1"/><path d="M995.6,960.6 Q997.2,961 997.6,962.4 Q996.4,964.2 997.4,966.6 M999.6,958.6 Q1000,960.4 1001.8,960.8 Q1002.2,962.8 1000.6,964" fill="none" stroke="#dcdcdc" stroke-width="0.9"/><rect x="1030.9" y="953" width="2" height="2" fill="#777"/><path d="M1036,954 L1044.7,954" stroke="#777" stroke-width="1.9"/><rect x="1036.4" y="956.9" width="2" height="2" fill="#777"/><path d="M1041.2,957.9 L1049.9,957.9" stroke="#777" stroke-width="1.9"/><rect x="1036.4" y="960.8" width="2" height="2" fill="#777"/><path d="M1041.2,961.8 L1049.9,961.8" stroke="#777" stroke-width="1.9"/><rect x="1033.5" y="964.7" width="2" height="2" fill="#777"/><path d="M1038.6,965.7 L1047,965.7" stroke="#777" stroke-width="1.9"/><path d="M1077.2,954 L1094.9,954" stroke="#777" stroke-width="1.9"/><path d="M1077.2,957.9 L1091,957.9" stroke="#777" stroke-width="1.9"/><path d="M1077.2,961.8 L1093.9,961.8" stroke="#777" stroke-width="1.9"/><path d="M1077.2,965.7 L1091,965.7" stroke="#777" stroke-width="1.9"/><path d="M1120.4,959.6 L1130.2,959.6" stroke="#555" stroke-width="2.2"/><rect x="1139.6" y="957.6" width="128.8" height="4.4" rx="2.2" fill="#8c8c8c"/><circle cx="1201.3" cy="959.3" r="10.1" fill="#fff" filter="url(#ks)"/><path d="M1277.8,959.6 L1287.8,959.6 M1282.8,954.4 L1282.8,964.8" stroke="#555" stroke-width="2.2"/><defs><filter id="cs" x="-50%" y="-50%" width="200%" height="200%"><feDropShadow dx="0" dy="1.5" stdDeviation="1.9" flood-opacity="0.42"/></filter></defs><path d="M248.5,302.2 L248.9,361.4 L236.6,351 L227.6,370.8 L214.8,364.6 L222.2,346.4 L204.8,345 Z" fill="#fff" stroke="#fff" stroke-width="0.6" stroke-linejoin="round" filter="url(#cs)"/><path d="M245,310.8 L244.9,351.8 L236.4,343.6 L225.2,365 L219.6,362.6 L227.6,342.8 L214,341.4 Z" fill="#0d0d0d"/></svg>
</div>
</body></html>
